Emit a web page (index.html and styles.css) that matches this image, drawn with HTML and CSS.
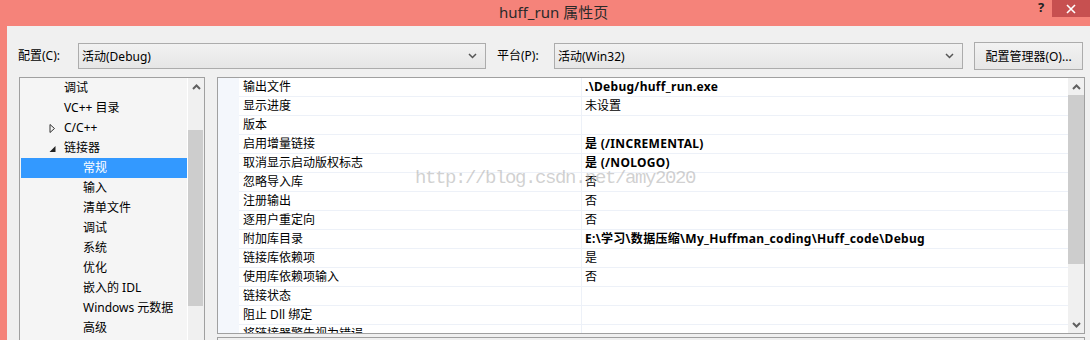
FILE: index.html
```html
<!DOCTYPE html>
<html lang="zh-CN">
<head>
    <meta charset="UTF-8">
    <title>huff_run 属性页</title>
    <link rel="stylesheet" href="styles.css">
</head>
<body>
<div class="window">
    <div class="titlebar">
        <span class="title">huff_run 属性页</span>
        <span class="help">?</span>
        <span class="close">
            <svg width="10" height="10" viewBox="0 0 10 10"><path d="M1 1 L9 9 M9 1 L1 9" stroke="#fff" stroke-width="1.6"/></svg>
        </span>
    </div>

    <div class="client">
        <div class="toolbar">
            <label class="tb-label tb-config">配置(C):</label>
            <div class="combo combo-config">
                <span>活动(Debug)</span>
                <svg class="chev" width="9" height="6" viewBox="0 0 9 6"><path d="M1 1 L4.5 4.5 L8 1" fill="none" stroke="#555" stroke-width="1.5"/></svg>
            </div>
            <label class="tb-label tb-platform">平台(P):</label>
            <div class="combo combo-platform">
                <span>活动(Win32)</span>
                <svg class="chev" width="9" height="6" viewBox="0 0 9 6"><path d="M1 1 L4.5 4.5 L8 1" fill="none" stroke="#555" stroke-width="1.5"/></svg>
            </div>
            <button class="btn">配置管理器(O)...</button>
        </div>

        <div class="panes">
            <!-- 左侧树 -->
            <div class="tree">
                <div class="tree-items">
                    <div class="node lvl1">调试</div>
                    <div class="node lvl1">VC++ 目录</div>
                    <div class="node lvl1">
                        <svg class="twisty" width="7" height="9" viewBox="0 0 7 9"><path d="M1 0.5 L5.5 4.5 L1 8.5 Z" fill="none" stroke="#333" stroke-width="1"/></svg>
                        C/C++
                    </div>
                    <div class="node lvl1">
                        <svg class="twisty" width="7" height="9" viewBox="0 0 7 9"><path d="M6.5 2 L6.5 8 L0.5 8 Z" fill="#222"/></svg>
                        链接器
                    </div>
                    <div class="node lvl2 selected">常规</div>
                    <div class="node lvl2">输入</div>
                    <div class="node lvl2">清单文件</div>
                    <div class="node lvl2">调试</div>
                    <div class="node lvl2">系统</div>
                    <div class="node lvl2">优化</div>
                    <div class="node lvl2">嵌入的 IDL</div>
                    <div class="node lvl2">Windows 元数据</div>
                    <div class="node lvl2">高级</div>
                </div>
                <div class="vscroll tree-scroll">
                    <div class="arrow">
                        <svg width="9" height="6" viewBox="0 0 9 6"><path d="M1 5 L4.5 1.5 L8 5" fill="none" stroke="#606060" stroke-width="2"/></svg>
                    </div>
                    <div class="thumb tree-thumb"></div>
                </div>
            </div>

            <!-- 右侧属性表 -->
            <div class="right">
                <div class="grid">
                    <div class="rows">
                        <div class="row"><div class="gutter"></div><div class="name">输出文件</div><div class="value bold">.\Debug/huff_run.exe</div></div>
                        <div class="row"><div class="gutter"></div><div class="name">显示进度</div><div class="value">未设置</div></div>
                        <div class="row"><div class="gutter"></div><div class="name">版本</div><div class="value"></div></div>
                        <div class="row"><div class="gutter"></div><div class="name">启用增量链接</div><div class="value bold">是 (/INCREMENTAL)</div></div>
                        <div class="row"><div class="gutter"></div><div class="name">取消显示启动版权标志</div><div class="value bold">是 (/NOLOGO)</div></div>
                        <div class="row"><div class="gutter"></div><div class="name">忽略导入库</div><div class="value">否</div></div>
                        <div class="row"><div class="gutter"></div><div class="name">注册输出</div><div class="value">否</div></div>
                        <div class="row"><div class="gutter"></div><div class="name">逐用户重定向</div><div class="value">否</div></div>
                        <div class="row"><div class="gutter"></div><div class="name">附加库目录</div><div class="value bold">E:\学习\数据压缩\My_Huffman_coding\Huff_code\Debug</div></div>
                        <div class="row"><div class="gutter"></div><div class="name">链接库依赖项</div><div class="value">是</div></div>
                        <div class="row"><div class="gutter"></div><div class="name">使用库依赖项输入</div><div class="value">否</div></div>
                        <div class="row"><div class="gutter"></div><div class="name">链接状态</div><div class="value"></div></div>
                        <div class="row"><div class="gutter"></div><div class="name">阻止 Dll 绑定</div><div class="value"></div></div>
                        <div class="row"><div class="gutter"></div><div class="name">将链接器警告视为错误</div><div class="value"></div></div>
                    </div>
                    <div class="vscroll grid-scroll">
                        <div class="arrow">
                            <svg width="9" height="6" viewBox="0 0 9 6"><path d="M1 5 L4.5 1.5 L8 5" fill="none" stroke="#606060" stroke-width="2"/></svg>
                        </div>
                        <div class="thumb grid-thumb"></div>
                        <div class="track-fill"></div>
                        <div class="arrow">
                            <svg width="9" height="6" viewBox="0 0 9 6"><path d="M1 1 L4.5 4.5 L8 1" fill="none" stroke="#606060" stroke-width="2"/></svg>
                        </div>
                    </div>
                </div>
                <div class="desc"></div>
            </div>
        </div>
    </div>
</div>

<div class="watermark">http://blog.csdn.net/amy2020</div>
</body>
</html>
```

FILE: styles.css
```css
* {
    box-sizing: border-box;
    margin: 0;
    padding: 0;
}

body {
    width: 1090px;
    height: 340px;
    overflow: hidden;
    font-family: "Noto Sans", "Noto Sans CJK SC", sans-serif;
    font-size: 12px;
    color: #000;
    background: #F0F0F0;
    position: relative;
}

.window {
    height: 340px;
    display: flex;
    flex-direction: column;
}

/* 标题栏 */
.titlebar {
    height: 26px;
    flex-shrink: 0;
    background: #F5837A;
    display: flex;
    align-items: flex-start;
}

.title {
    margin-left: 499px;
    margin-top: 3px;
    font-size: 15px;
    line-height: 18px;
    color: #2a2a2a;
}

.help {
    margin-left: auto;
    margin-right: 4px;
    width: 10px;
    font-size: 13px;
    font-weight: 700;
    line-height: 14px;
    color: #222;
}

.close {
    width: 38px;
    height: 17px;
    background: #C75050;
    display: flex;
    align-items: center;
    justify-content: center;
}

/* 客户区 */
.client {
    flex: 1;
    border-left: 7px solid #F5837A;
    background: #F0F0F0;
    overflow: hidden;
}

.toolbar {
    display: flex;
    align-items: center;
    height: 28px;
    margin-top: 16px;
    padding-left: 11px;
}

.tb-label {
    line-height: 20px;
}

.tb-config {
    width: 60px;
}

.tb-platform {
    width: 57px;
    margin-left: 11px;
}

.combo {
    height: 26px;
    border: 1px solid #ACACAC;
    background: linear-gradient(#F2F2F2, #E6E6E6);
    display: flex;
    align-items: center;
    justify-content: space-between;
    padding: 0 8px 0 3px;
}

.combo-config {
    width: 408px;
}

.combo-platform {
    width: 409px;
}

.btn {
    width: 109px;
    height: 28px;
    margin-left: 11px;
    border: 1px solid #ACACAC;
    background: linear-gradient(#F2F2F2, #E6E6E6);
    font-family: inherit;
    font-size: 12px;
    color: #000;
}

.panes {
    display: flex;
    margin-top: 7px;
    padding-left: 12px;
    gap: 12px;
}

/* 左侧树 */
.tree {
    width: 186px;
    height: 290px;
    border: 1px solid #A0A0A0;
    background: #F5F5F5;
    display: flex;
}

.tree-items {
    flex: 1;
    padding-left: 1px;
}

.node {
    height: 20px;
    line-height: 20px;
    position: relative;
    white-space: nowrap;
}

.lvl1 {
    padding-left: 43px;
}

.lvl2 {
    padding-left: 62px;
}

.twisty {
    position: absolute;
    left: 28px;
    top: 6px;
}

.selected {
    background: #3399FF;
    color: #fff;
}

.vscroll {
    width: 17px;
    border-left: 1px solid #fff;
    background: #F0F0F0;
    display: flex;
    flex-direction: column;
}

.arrow {
    height: 17px;
    display: flex;
    align-items: center;
    justify-content: center;
}

.thumb {
    background: #CDCDCD;
}

.tree-thumb {
    height: 176px;
    margin: 35px 1px 0 0;
}

/* 右侧属性表 */
.right {
    width: 868px;
    display: flex;
    flex-direction: column;
}

.grid {
    height: 257px;
    border: 1px solid #A0A0A0;
    background: #fff;
    display: flex;
    overflow: hidden;
}

.rows {
    flex: 1;
    overflow: hidden;
}

.row {
    display: flex;
    height: 19px;
}

.gutter {
    width: 21px;
    flex-shrink: 0;
    background: #F4F7FC;
}

.name,
.value {
    line-height: 18px;
    height: 19px;
    border-bottom: 1px solid #EDF1F8;
    white-space: nowrap;
    overflow: hidden;
}

.name {
    width: 343px;
    flex-shrink: 0;
    padding-left: 4px;
    border-right: 1px solid #EDF1F8;
}

.value {
    flex: 1;
    padding-left: 3px;
}

.bold {
    font-weight: 700;
    letter-spacing: 0.3px;
}

.grid-scroll {
    width: 16px;
    border-left: none;
    background: #F0F0F0;
}

.grid-thumb {
    height: 169px;
}

.track-fill {
    flex: 1;
}

.desc {
    height: 10px;
    margin-top: 3px;
    border: 1px solid #A0A0A0;
    border-bottom: none;
    background: #F0F0F0;
}

/* 水印 */
.watermark {
    position: absolute;
    left: 415px;
    top: 167px;
    font-family: "Liberation Mono", monospace;
    font-size: 19px;
    letter-spacing: -1.4px;
    color: rgba(170, 170, 170, 0.55);
    pointer-events: none;
}
```
